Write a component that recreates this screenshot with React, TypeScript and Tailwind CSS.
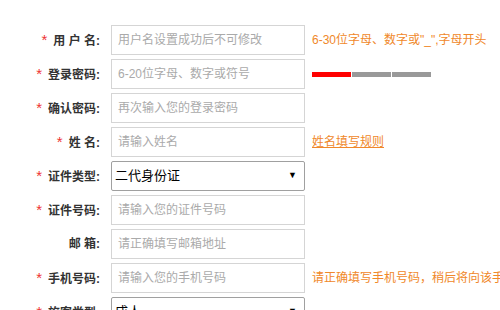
import React from 'react';

type Row = {
  label: string;
  required: boolean;
  kind: 'input' | 'select';
  text: string;
  hint?: React.ReactNode;
};

const ROWS: Row[] = [
  {
    label: '用 户 名:',
    required: true,
    kind: 'input',
    text: '用户名设置成功后不可修改',
    hint: <span className="text-[#f0882a]">6-30位字母、数字或"_",字母开头</span>,
  },
  {
    label: '登录密码:',
    required: true,
    kind: 'input',
    text: '6-20位字母、数字或符号',
    hint: (
      <div className="flex gap-[1px]">
        <div className="w-[39px] h-[5px] bg-[#ff0000]" />
        <div className="w-[39px] h-[5px] bg-[#999999]" />
        <div className="w-[39px] h-[5px] bg-[#999999]" />
      </div>
    ),
  },
  { label: '确认密码:', required: true, kind: 'input', text: '再次输入您的登录密码' },
  {
    label: '姓 名:',
    required: true,
    kind: 'input',
    text: '请输入姓名',
    hint: <a className="text-[#f0882a] underline cursor-pointer">姓名填写规则</a>,
  },
  { label: '证件类型:', required: true, kind: 'select', text: '二代身份证' },
  { label: '证件号码:', required: true, kind: 'input', text: '请输入您的证件号码' },
  { label: '邮 箱:', required: false, kind: 'input', text: '请正确填写邮箱地址' },
  {
    label: '手机号码:',
    required: true,
    kind: 'input',
    text: '请输入您的手机号码',
    hint: <span className="text-[#f0882a]">请正确填写手机号码，稍后将向该手机号码发送短信验证码</span>,
  },
  { label: '旅客类型:', required: true, kind: 'select', text: '成人' },
];

export default function App() {
  return (
    <div
      className="w-[500px] h-[310px] overflow-hidden bg-white pt-[25px] text-[12px] text-[#333]"
      style={{ fontFamily: '"Liberation Sans", "Noto Sans CJK SC", sans-serif' }}
    >
      {ROWS.map((row) => (
        <div key={row.label} className="flex items-center h-[30px] mb-[4px] whitespace-nowrap">
          {/* label column */}
          <div className="w-[100px] shrink-0 text-right font-bold">
            {row.required && <span className="text-[#ee3333] font-normal text-[15px] mr-[6px]">*</span>}
            {row.label}
          </div>

          {/* field */}
          {row.kind === 'input' ? (
            <div className="ml-[11px] w-[194px] h-[30px] shrink-0 border border-[#d5d5d5] flex items-center px-[6px] text-[#aaa]">
              {row.text}
            </div>
          ) : (
            <div className="ml-[11px] w-[194px] h-[30px] shrink-0 border border-[#a0a0a0] rounded-[2px] flex items-center justify-between pl-[3px] pr-[7px] text-black text-[13px]">
              <span>{row.text}</span>
              <span className="text-[9px]">▼</span>
            </div>
          )}

          {/* hint */}
          {row.hint && <div className="ml-[7px]">{row.hint}</div>}
        </div>
      ))}
    </div>
  );
}
